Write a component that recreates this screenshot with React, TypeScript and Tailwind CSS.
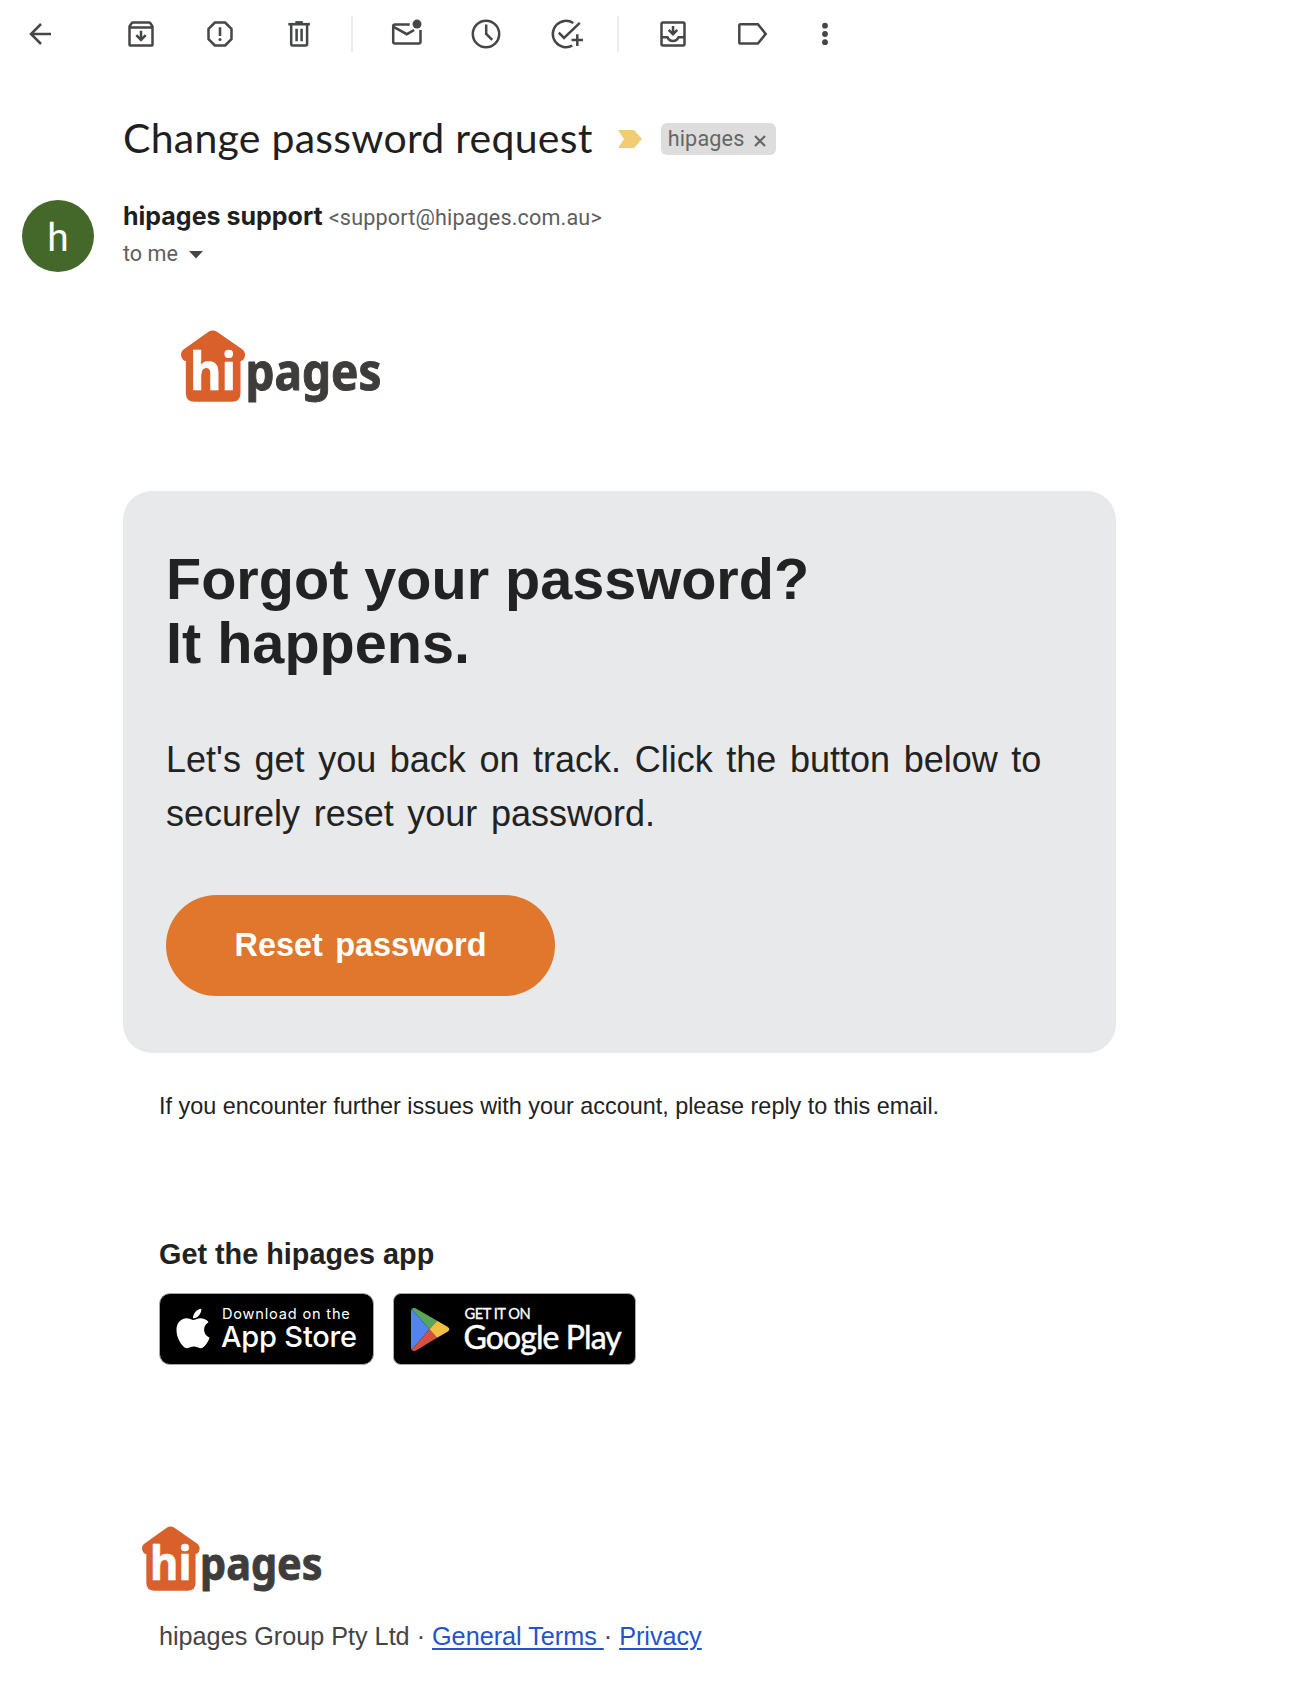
import type { ReactNode } from "react";
import { FaApple } from "react-icons/fa";

function Icon({ children, className = "" }: { children: ReactNode; className?: string }) {
  return (
    <svg
      viewBox="0 0 36 36"
      className={`h-9 w-9 shrink-0 ${className}`}
      fill="none"
      stroke="#444746"
      strokeWidth="2.5"
      strokeLinejoin="round"
    >
      {children}
    </svg>
  );
}

function Toolbar() {
  return (
    <header className="flex h-[68px] items-center">
      <Icon className="ml-[22px]">
        <path d="M29 18H9.5M19 8 9 18l10 10" strokeLinejoin="miter" />
      </Icon>
      <Icon className="ml-[65px]">
        <path d="M6.500 10.500V28.200Q6.500 29.600 7.900 29.600H28.100Q29.500 29.600 29.500 28.200V10.500L27.400 7.300Q26.900 6.500 25.900 6.500H10.100Q9.100 6.500 8.600 7.300Z" />
        <path d="M6.500 11.400H29.500M18 14.800v8.800M13.300 19.200l4.700 4.700 4.700-4.700" strokeLinejoin="miter" />
      </Icon>
      <Icon className="ml-[43px]">
        <path d="M12.900 6.500h10.200l6.400 6.400v10.200l-6.400 6.400H12.900l-6.400-6.400V12.900z" />
        <path d="M18 11.300v8.700" strokeWidth="2.600" />
        <circle cx="18" cy="23.400" r="1.500" fill="#444746" stroke="none" />
      </Icon>
      <Icon className="ml-[43px]">
        <path d="M7.300 8.200H28.900" strokeWidth="2.600" />
        <path d="M14.300 6.600h7.500" strokeWidth="3" />
        <path d="M10.200 8.500V28q0 1.500 1.500 1.500H24.600q1.500 0 1.500-1.500V8.500M15.600 12.700v12.500M20.600 12.700v12.500" />
      </Icon>
      <div className="ml-[34px] h-9 w-0.5 bg-[#ececee]" />
      <Icon className="ml-[36px]">
        <path d="M20.700 8.400H6q-1.800 0-1.800 1.800V25.800q0 1.800 1.800 1.800H29.700q1.800 0 1.800-1.800V14" />
        <path d="M4.600 10.800 17.800 18.200 25.200 14" strokeLinejoin="miter" />
        <circle cx="28" cy="8.100" r="4.500" fill="#444746" stroke="none" />
      </Icon>
      <Icon className="ml-[43px]">
        <circle cx="18" cy="18" r="13.200" />
        <path d="M18.200 8.500V18l6 5.900" strokeLinejoin="miter" />
      </Icon>
      <Icon className="ml-[44px]">
        <path d="M25.300 7A13.200 13.200 0 1 0 24.300 29.600" />
        <path d="M10.800 16.700 16 22 31.800 6.800M29.300 18.200V30M23.500 24.100H35" strokeLinejoin="miter" />
      </Icon>
      <div className="ml-[33px] h-9 w-0.5 bg-[#ececee]" />
      <Icon className="ml-[36px]">
        <rect x="6.500" y="6.500" width="23" height="23" rx="1.500" />
        <path d="M6.500 21.200H12.500Q14.200 25 18 25T23.500 21.200H29.500M18 10v8.500M13.700 13.900 18 18.200l4.300-4.300" strokeLinejoin="miter" />
      </Icon>
      <Icon className="ml-[44px]">
        <path d="M5.600 8.200H22.900L30.700 17.900 22.900 27.600H5.600q-1.300 0-1.300-1.300V9.500q0-1.300 1.300-1.300z" strokeLinejoin="miter" />
      </Icon>
      <Icon className="ml-[36px]">
        <g fill="#444746" stroke="none">
          <circle cx="18" cy="9.700" r="2.900" />
          <circle cx="18" cy="18" r="2.900" />
          <circle cx="18" cy="26.200" r="2.900" />
        </g>
      </Icon>
    </header>
  );
}

function Logo({ className }: { className: string }) {
  return (
    <svg viewBox="0 0 200 72" className={`overflow-visible ${className}`} role="img" aria-label="hipages">
      <path
        fill="#d95f2b"
        d="M27.500 1.700Q31.700-.9 36 1.700L61.500 19.500Q65 22.500 63.700 27 62.300 31 59.500 31V63Q59.500 71.700 51 71.700H13.500Q4.800 71.700 4.800 63V31Q2 31 .4 27-1 22.500 2.500 19.500Z"
      />
      <g fontFamily="'Noto Sans', sans-serif" fontWeight="700" strokeLinejoin="round">
        <text x="9" y="59.500" fontSize="52" textLength="46" lengthAdjust="spacingAndGlyphs" fill="#fff" stroke="#fff" strokeWidth=".7">hi</text>
        <text x="64.500" y="59.700" fontSize="50.500" textLength="136" lengthAdjust="spacingAndGlyphs" fill="#3e3d3b" stroke="#3e3d3b" strokeWidth="1">pages</text>
      </g>
    </svg>
  );
}

function AppStoreBadge() {
  return (
    <a className="flex h-[72px] w-[215px] rounded-[11px] border-[1.500px] border-[#a6a6a6] bg-black pl-4 pt-[12px] text-white font-['Inter',sans-serif]">
      <FaApple className="h-[45px] w-[34px] shrink-0" />
      <span className="ml-[12px] flex flex-col whitespace-nowrap">
        <span className="text-[14.600px] leading-4 tracking-[0.800px]">Download on the</span>
        <span className="ml-[-1px] text-[29px] font-medium leading-[30px] tracking-[-0.200px]">App Store</span>
      </span>
    </a>
  );
}

function GooglePlayBadge() {
  return (
    <a className="flex h-[72px] w-[243px] rounded-[8px] border border-[#a6a6a6] bg-black pl-[17px] pt-[11px] text-white font-['Lato',sans-serif]">
      <svg viewBox="0 0 115 128" className="mt-[3px] h-[43px] w-[38.500px] shrink-0">
        <path fill="#58a55c" d="M2 3Q8-3 16 2L78 38 55 63Z" />
        <path fill="#5383ec" d="M2 3 55 63 2 125Q0 122 0 118V10Q0 6 2 3Z" />
        <path fill="#d85140" d="M2 125Q8 131 16 126L78 89 55 63Z" />
        <path fill="#f1bf42" d="M78 38 109 56Q120 63 109 71L78 89 55 63Z" />
      </svg>
      <span className="ml-[15px] flex flex-col whitespace-nowrap">
        <span className="text-[14.700px] leading-[16px] tracking-[-0.500px] [-webkit-text-stroke:0.300px_white]">GET IT ON</span>
        <span className="ml-[-1px] text-[32px] leading-8 tracking-[-0.900px] [-webkit-text-stroke:0.500px_white]">Google Play</span>
      </span>
    </a>
  );
}

export default function App() {
  return (
    <div className="h-[1696px] w-[1292px] overflow-hidden bg-white font-['Liberation_Sans',Arial,sans-serif] text-[#222222]">
      <Toolbar />

      <div className="mt-[47px] flex h-12 items-center pl-[123px]">
        <h1 className="whitespace-nowrap pb-[2px] font-['Lato',sans-serif] text-[41px] leading-[46px] tracking-[0.250px] text-[#1f1f1f]">
          Change password request
        </h1>
        <svg viewBox="0 0 24 18" className="ml-[25px] h-[18px] w-6 shrink-0">
          <path d="M0 0H16L24 9 16 18H0L6 9Z" fill="#f0cc73" />
        </svg>
        <div className="ml-[19px] flex h-8 w-[115px] items-center rounded-md bg-[#dddddd] pl-[7px] font-['Roboto',sans-serif] text-[21.600px] tracking-[0.150px] text-[#666666]">
          hipages
          <svg viewBox="0 0 12 12" className="ml-[10px] mt-[3px] h-3 w-3 shrink-0" stroke="#666" strokeWidth="2.200">
            <path d="M1 1 11 11M11 1 1 11" />
          </svg>
        </div>
      </div>

      <div className="mt-[37px] flex h-[72px] pl-[22px]">
        <div className="flex h-[72px] w-[72px] items-center justify-center rounded-full bg-[#44672a] pt-[4px] font-['Roboto',sans-serif] text-[39px] text-white">
          h
        </div>
        <div className="ml-[29px] font-['Roboto',sans-serif] text-[21.600px] text-[#5e5e5e]">
          <div className="flex h-9 items-baseline whitespace-nowrap leading-[33px]">
            <span className="font-['Inter',sans-serif] text-[25px] font-bold text-[#1f1f1f]">hipages support</span>
            <span className="ml-[6px] tracking-[0.150px]">&lt;support@hipages.com.au&gt;</span>
          </div>
          <div className="flex h-9 items-center">
            to me
            <svg viewBox="0 0 14 8" className="ml-[11px] mt-[2px] h-2 w-[14px]">
              <path d="M0 0H14L7 7.500Z" fill="#444746" />
            </svg>
          </div>
        </div>
      </div>

      <Logo className="ml-[181px] mt-[58px] h-[72px] w-[200px]" />

      <section className="ml-[123px] mt-[89px] h-[562px] w-[993px] rounded-[29px] bg-[#e8e9eb] pl-[43px] pt-[56px]">
        <h2 className="text-[57.600px] font-bold leading-[64px]">
          Forgot your password?
          <br />
          It happens.
        </h2>
        <p className="mt-[58px] whitespace-nowrap text-[36px] leading-[54px] [word-spacing:3.600px]">
          Let's get you back on track. Click the button below to
          <br />
          securely reset your password.
        </p>
        <button className="mt-[54px] flex h-[101px] w-[389px] items-center justify-center rounded-full bg-[#e0772d] text-[32.400px] font-bold text-white [word-spacing:3.600px]">
          Reset password
        </button>
      </section>

      <p className="ml-[159px] mt-[38px] text-[23.400px] leading-[30px]">
        If you encounter further issues with your account, please reply to this email.
      </p>

      <h3 className="ml-[159px] mt-[116px] text-[28.800px] font-bold leading-[34px]">Get the hipages app</h3>
      <div className="ml-[159px] mt-[22px] flex gap-[19px]">
        <AppStoreBadge />
        <GooglePlayBadge />
      </div>

      <Logo className="ml-[142px] mt-[161px] h-[65px] w-[180px]" />
      <p className="ml-[159px] mt-[29px] text-[25.200px] leading-8 text-[#444444]">
        hipages Group Pty Ltd ·{" "}
        <a className="text-[#2553c9] underline decoration-2 underline-offset-[3px]">General Terms </a>·{" "}
        <a className="text-[#2553c9] underline decoration-2 underline-offset-[3px]">Privacy</a>
      </p>
    </div>
  );
}
